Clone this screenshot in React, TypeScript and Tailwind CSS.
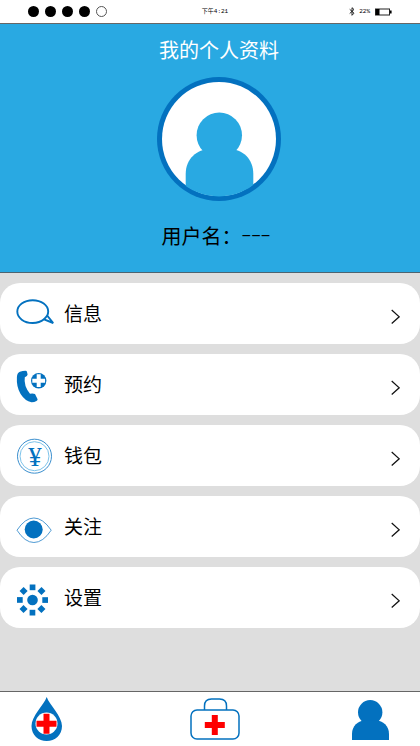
import type { ReactNode } from "react";

type MenuItem = { label: string; href: string; icon: ReactNode };

const toothAngles = [0, 45, 90, 135, 180, 225, 270, 315];

const menu: MenuItem[] = [
  { label: "信息", href: "#messages", icon: <BubbleIcon /> },
  { label: "预约", href: "#booking", icon: <PhoneIcon /> },
  { label: "钱包", href: "#wallet", icon: <CoinIcon /> },
  { label: "关注", href: "#following", icon: <EyeIcon /> },
  { label: "设置", href: "#settings", icon: <GearIcon /> },
];

export default function App() {
  return (
    <div className="flex min-h-screen flex-col bg-[#dedede] font-['Liberation_Sans','Noto_Sans_CJK_SC',sans-serif] text-black">
      <StatusBar />
      <ProfileHeader />
      <main className="flex-1 pt-[10px] pb-4">
        <ul className="flex flex-col gap-[10px]">
          {menu.map((item) => (
            <li key={item.href}>
              <a href={item.href} className="flex h-[61px] items-center rounded-[20px] bg-white pr-5 pl-4">
                {item.icon}
                <span className="mt-[3px] ml-2 flex-1 text-[19px] leading-6">{item.label}</span>
                <Chevron />
              </a>
            </li>
          ))}
        </ul>
      </main>
      <TabBar />
    </div>
  );
}

function StatusBar() {
  return (
    <header className="grid h-6 grid-cols-3 items-center border-b border-[#666] bg-white pr-7 pl-7 font-['Liberation_Mono','Noto_Sans_CJK_SC',monospace] text-[6px] leading-3">
      <div className="flex items-center gap-[6px]">
        <span className="size-[11px] rounded-full bg-black" />
        <span className="size-[11px] rounded-full bg-black" />
        <span className="size-[11px] rounded-full bg-black" />
        <span className="size-[11px] rounded-full bg-black" />
        <span className="size-[11px] rounded-full border border-[#555]" />
      </div>
      <time className="pl-[10px] text-center">下午4:21</time>
      <div className="flex items-center justify-end">
        <svg width="6" height="9" viewBox="0 0 6 9" fill="none" stroke="#111" strokeWidth="0.9" aria-hidden="true">
          <path d="M.7 2.3 5 6.2 3 8.3V.7l2 1.8L.7 6.5" />
        </svg>
        <span className="mr-[5px] ml-1">22%</span>
        <svg width="17" height="8" viewBox="0 0 17 8" aria-hidden="true">
          <rect x=".5" y="1" width="14" height="6" fill="none" stroke="#222" />
          <path d="M1 1h3.5v6H1zM15 2.5h1.6v3H15z" fill="#000" />
        </svg>
      </div>
    </header>
  );
}

function ProfileHeader() {
  return (
    <section className="flex flex-col items-center border-b border-[#4d6470] bg-[#29a9e2] pt-[14px] pb-[22px] pl-[18px]">
      <h1 className="text-xl leading-[26px] text-white">我的个人资料</h1>
      <svg width="124" height="124" viewBox="0 0 124 124" className="mt-[13px]" role="img" aria-label="头像">
        <clipPath id="avatar">
          <circle cx="62" cy="62" r="57.5" />
        </clipPath>
        <circle cx="62" cy="62" r="62" fill="#0371bf" />
        <circle cx="62" cy="62" r="57" fill="#fff" />
        <g clipPath="url(#avatar)" fill="#29a9e2">
          <circle cx="62.3" cy="58.3" r="22.7" />
          <path d="M28.7 124V97c0-15 11-25 25-25h18c14 0 24.6 10 24.6 25v27z" />
        </g>
      </svg>
      <p className="mt-[23px] flex items-center pr-[6px] text-[20px] leading-[26px]">
        用户名：<span className="font-['Liberation_Mono',monospace] text-base leading-[26px]">−−−</span>
      </p>
    </section>
  );
}

function Chevron() {
  return (
    <svg width="9" height="20" viewBox="0 0 9 20" fill="none" stroke="#111" strokeWidth="1.2" aria-hidden="true">
      <path d="M.7 6 8.2 12.800.7 19.500" />
    </svg>
  );
}

function BubbleIcon() {
  return (
    <svg width="40" height="41" viewBox="0 0 40 41" fill="none" stroke="#0371bf" strokeWidth="1.9" aria-hidden="true">
      <path d="M28 26.300C25 28.800 21 30 16.700 30 8 30 1.300 24.900 1.300 18.600S8 7.200 16.700 7.200 32.200 12.300 32.200 18.600c0 1.500-.4 2.900-1 4.100l6 7.300z" />
      <path d="M28 26.300l3.200-3.600" />
    </svg>
  );
}

function PhoneIcon() {
  return (
    <svg width="40" height="41" viewBox="0 0 40 41" fill="#0371bf" aria-hidden="true">
      <path d="M9.500 6.700q1.300 0 1.500 1.300l.6 2.500q0 1.600-2.800 2.800-1.300 8.500 5.200 16.500 3-.8 5 .3l2.500 4.900q.5 1.200-1 2-2.500 1.300-5 1.200Q9 37 4.600 30 .3 23 .9 13q.3-4.400 3-5.200Q6.700 6.800 9.500 6.700z" />
      <circle cx="22.700" cy="16.700" r="7.700" />
      <path d="M20.700 10.300h4v4.400h4.400v4h-4.400v4.400h-4v-4.400h-4.400v-4h4.400z" fill="#fff" />
    </svg>
  );
}

function CoinIcon() {
  return (
    <svg width="40" height="41" viewBox="0 0 40 41" fill="none" aria-hidden="true">
      <circle cx="18.500" cy="21.200" r="17" stroke="#3b8fce" />
      <circle cx="18.500" cy="21.200" r="14.500" stroke="#7dc3ea" />
      <text x="19" y="30.500" textAnchor="middle" fill="#0371bf" className="font-['Liberation_Serif',serif] text-[27px]">
        ¥
      </text>
    </svg>
  );
}

function EyeIcon() {
  return (
    <svg width="40" height="41" viewBox="0 0 40 41" aria-hidden="true">
      <path
        d="M1 24.200Q9 12 17.900 12T35.200 24.200Q27 36.500 17.900 36.500T1 24.200z"
        fill="none"
        stroke="#3b8fce"
        strokeWidth="0.9"
      />
      <circle cx="17.700" cy="23.500" r="9" fill="#0371bf" />
    </svg>
  );
}

function GearIcon() {
  return (
    <svg width="40" height="41" viewBox="0 0 40 41" fill="#0371bf" aria-hidden="true">
      <circle cx="16.500" cy="23" r="5.300" />
      {toothAngles.map((angle) => (
        <rect key={angle} x="13.700" y="7.500" width="5.700" height="5.700" transform={`rotate(${angle} 16.5 23)`} />
      ))}
    </svg>
  );
}

function TabBar() {
  return (
    <nav className="flex h-[55px] items-start border-t border-[#666] bg-white px-[31px] pt-[5px]">
      <a href="#home" aria-label="献血">
        <svg width="31" height="44" viewBox="0 0 31 44" aria-hidden="true">
          <path d="M15.700 0C18.500 8 31 19 31 29c0 9-7 15-15.300 15S.5 38 .5 29C.5 19 12.900 8 15.700 0z" fill="#0371bf" />
          <circle cx="15.500" cy="26.500" r="11" fill="#fff" />
          <path d="M12.500 16.800h6v7h7v6h-7v7h-6v-7h-7v-6h7z" fill="#fe0000" />
        </svg>
      </a>
      <div className="flex flex-1 justify-center pl-4">
        <a href="#care" aria-label="医疗">
          <svg width="50" height="44" viewBox="0 0 50 44" fill="none" stroke="#0371bf" strokeWidth="1.500" aria-hidden="true">
            <path d="M14.500 13V9q0-7 7-7h8q7 0 7 7v4" />
            <rect x="1" y="13" width="48" height="29" rx="6" />
            <path d="M21.800 18h6v7h7v6h-7v7h-6v-7h-7v-6h7z" fill="#fe0000" stroke="none" />
          </svg>
        </a>
      </div>
      <a href="#me" aria-label="我的" aria-current="page">
        <svg width="37" height="44" viewBox="0 0 37 44" fill="#0371bf" aria-hidden="true">
          <circle cx="18.200" cy="15.300" r="12.200" />
          <path d="M0 43v-6c0-8 6-13.500 13-13.500h11c7 0 13 5.500 13 13.500v6z" />
        </svg>
      </a>
    </nav>
  );
}
